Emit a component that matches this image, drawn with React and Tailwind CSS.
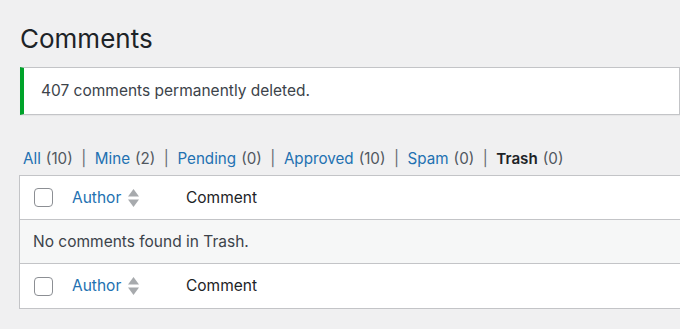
import React from "react";

const filters = [
  { label: "All", count: 10 },
  { label: "Mine", count: 2 },
  { label: "Pending", count: 0 },
  { label: "Approved", count: 10 },
  { label: "Spam", count: 0 },
  { label: "Trash", count: 0, current: true },
];

const Checkbox = () => (
  <span className="block w-[19px] h-[19px] rounded-[4px] border border-[#8c8f94] bg-white"></span>
);

const SortArrows = () => (
  <svg width="11" height="18" viewBox="0 0 11 18" className="ml-[7px]">
    <polygon points="5.5,0 11,7.5 0,7.5" fill="#a7aaad" />
    <polygon points="0,10.5 11,10.5 5.5,18" fill="#a7aaad" />
  </svg>
);

const HeaderRow = ({ last }) => (
  <div
    className={`flex items-center h-[44px] bg-white ${
      last ? "" : "border-b border-[#c3c4c7]"
    }`}
  >
    <div className="w-[52px] pl-[14px]">
      <Checkbox />
    </div>
    <div className="w-[114px] flex items-center">
      <span className="text-[#2271b1]">Author</span>
      <SortArrows />
    </div>
    <span className="text-[#1d2327]">Comment</span>
  </div>
);

const App = () => {
  return (
    <div
      className="w-[680px] h-[329px] overflow-hidden bg-[#f0f0f1] text-[#3c434a]"
      style={{ fontFamily: "Inter, 'Noto Sans', sans-serif" }}
    >
      <div className="pl-[20px]">
        <h1 className="pt-[22px] text-[26px] leading-[34px] text-[#1d2327]">
          Comments
        </h1>

        {/* Notice */}
        <div className="mt-[11px] h-[48px] w-[660px] flex items-center bg-white border border-[#c3c4c7] border-l-[4px] border-l-[#00a32a] shadow-[0_1px_1px_rgba(0,0,0,0.04)] pl-[17px] text-[15.5px] text-[#3c434a]">
          407 comments permanently deleted.
        </div>

        {/* Status filters */}
        <div className="mt-[33px] pl-[3px] flex items-center text-[15.2px] leading-[22px]">
          {filters.map((f, i) => (
            <span key={f.label} className="flex items-center">
              {i > 0 && <span className="mx-[8.5px] text-[#646970]">|</span>}
              <span
                className={
                  f.current ? "font-semibold text-[#1d2327]" : "text-[#2271b1]"
                }
              >
                {f.label}
              </span>
              <span className="ml-[5px] text-[#50575e]">({f.count})</span>
            </span>
          ))}
        </div>

        {/* Table */}
        <div className="mt-[5px] -ml-px w-[700px] border border-[#c3c4c7] text-[15.5px]">
          <HeaderRow />
          <div className="flex items-center h-[44px] bg-[#f6f7f7] border-b border-[#c3c4c7] pl-[13px] text-[#3c434a]">
            No comments found in Trash.
          </div>
          <HeaderRow last />
        </div>
      </div>
    </div>
  );
};

export default App;
